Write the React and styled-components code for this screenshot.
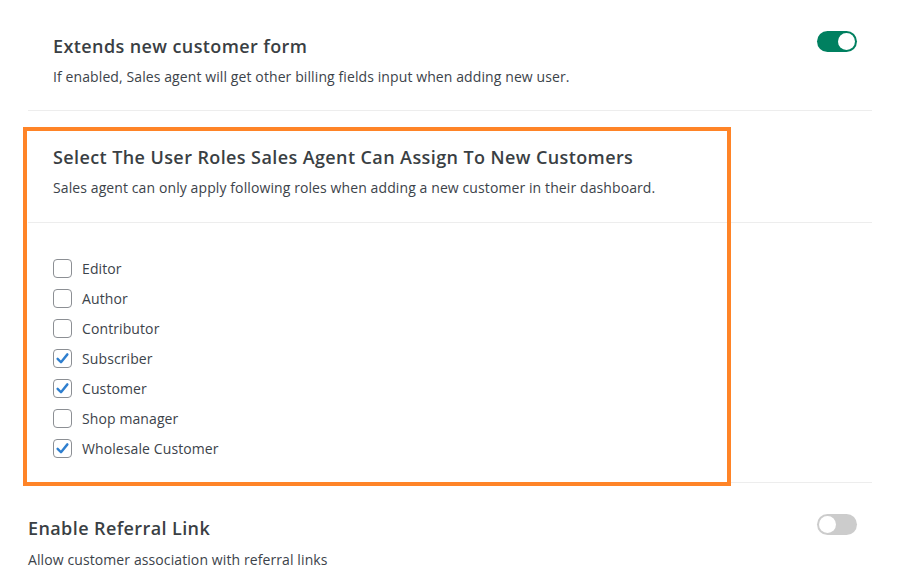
import React from "react";
import styled, { createGlobalStyle } from "styled-components";

const GlobalStyle = createGlobalStyle`
  body {
    margin: 0;
    background: #ffffff;
    font-family: "Open Sans", "Noto Sans", sans-serif;
  }
`;

const Page = styled.div`
  position: relative;
  width: 844px;
  padding-left: 28px;
`;

const Section = styled.div`
  display: flex;
  align-items: flex-start;
  justify-content: space-between;
  padding: ${(p) => p.$pad || "34px 0 23px"};
  padding-left: ${(p) => (p.$indent ? "25px" : "0")};
  border-bottom: ${(p) => (p.$last ? "none" : "1px solid #ededed")};
`;

const TextBlock = styled.div`
  display: flex;
  flex-direction: column;
  gap: ${(p) => p.$gap || "9px"};
`;

const Title = styled.div`
  font-size: 18px;
  line-height: 24px;
  font-weight: 600;
  color: #3a3f44;
  letter-spacing: 0.4px;
`;

const Desc = styled.div`
  font-size: 14px;
  line-height: 20px;
  color: #3c434a;
  letter-spacing: 0.1px;
`;

const Toggle = styled.div`
  width: 40px;
  height: 21px;
  border-radius: 11px;
  margin-right: 15px;
  margin-top: ${(p) => p.$offset || "-3px"};
  background: ${(p) => (p.$on ? "#008060" : "#cccccc")};
  display: flex;
  align-items: center;
  justify-content: ${(p) => (p.$on ? "flex-end" : "flex-start")};
  padding: 0 2px;
  box-sizing: border-box;
  flex-shrink: 0;
`;

const Knob = styled.div`
  width: 17px;
  height: 17px;
  border-radius: 50%;
  background: #ffffff;
`;

const RoleList = styled.div`
  display: flex;
  flex-direction: column;
  padding: 30px 0 19px 25px;
  border-bottom: 1px solid #ededed;
`;

const RoleRow = styled.label`
  display: flex;
  align-items: center;
  height: 30px;
  gap: 10px;
  font-size: 14px;
  color: #3c434a;
  letter-spacing: 0.1px;
`;

const Box = styled.span`
  width: 19px;
  height: 19px;
  box-sizing: border-box;
  border: 1px solid #8c8f94;
  border-radius: 4px;
  background: #fff;
  display: flex;
  align-items: center;
  justify-content: center;
`;

const Highlight = styled.div`
  position: absolute;
  left: 23px;
  top: 127px;
  width: 708px;
  height: 359px;
  border: 4px solid #ff8427;
  box-sizing: border-box;
  pointer-events: none;
`;

const roles = [
  { name: "Editor", on: false },
  { name: "Author", on: false },
  { name: "Contributor", on: false },
  { name: "Subscriber", on: true },
  { name: "Customer", on: true },
  { name: "Shop manager", on: false },
  { name: "Wholesale Customer", on: true },
];

function Check({ on }) {
  return (
    <Box>
      {on && (
        <svg width="15" height="15" viewBox="0 0 20 20">
          <path
            d="M3.5 10.5 L8 15 L16.5 4.5"
            fill="none"
            stroke="#2f7fcf"
            strokeWidth="3.2"
            strokeLinecap="round"
            strokeLinejoin="round"
          />
        </svg>
      )}
    </Box>
  );
}

export default function App() {
  return (
    <>
      <GlobalStyle />
      <Page>
        <Section $indent>
          <TextBlock>
            <Title>Extends new customer form</Title>
            <Desc>If enabled, Sales agent will get other billing fields input when adding new user.</Desc>
          </TextBlock>
          <Toggle $on>
            <Knob />
          </Toggle>
        </Section>
        <Section $indent $pad="34px 0 24px">
          <TextBlock>
            <Title>Select The User Roles Sales Agent Can Assign To New Customers</Title>
            <Desc>Sales agent can only apply following roles when adding a new customer in their dashboard.</Desc>
          </TextBlock>
        </Section>
        <RoleList>
          {roles.map((r) => (
            <RoleRow key={r.name}>
              <Check on={r.on} />
              {r.name}
            </RoleRow>
          ))}
        </RoleList>
        <Section $last $pad="33px 0 10px">
          <TextBlock $gap="10px">
            <Title>Enable Referral Link</Title>
            <Desc>Allow customer association with referral links</Desc>
          </TextBlock>
          <Toggle $offset="-2px">
            <Knob />
          </Toggle>
        </Section>
        <Highlight />
      </Page>
    </>
  );
}
